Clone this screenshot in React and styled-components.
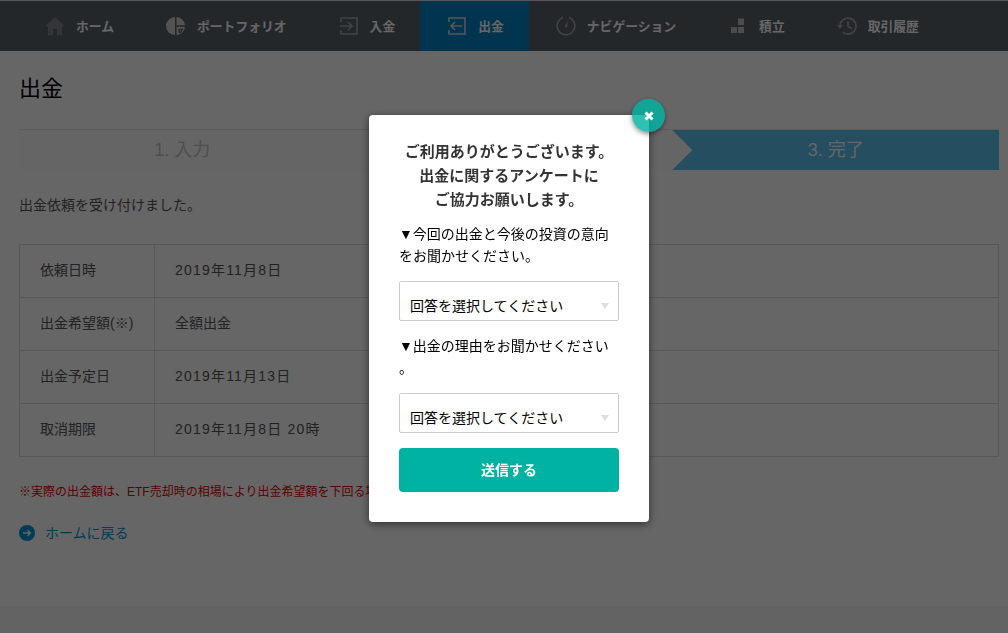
import React from "react";
import styled, { createGlobalStyle } from "styled-components";

const GlobalStyle = createGlobalStyle`
  html, body {
    margin: 0;
    height: 100%;
    overflow: hidden;
  }
  body {
    background: #fff;
    font-family: "Liberation Sans", "Noto Sans CJK JP", sans-serif;
    color: #555;
  }
  * { box-sizing: border-box; }
`;

const HomeIcon = () => (
  <svg width="20" height="20" viewBox="0 0 20 20" fill="#808488">
    <path d="M10 1 L20 10.5 H17 V19 H12 V13 H8 V19 H3 V10.5 H0 Z" />
  </svg>
);

const PieIcon = () => (
  <svg width="20" height="20" viewBox="0 0 20 20">
    <path fill="#d0d0d0" d="M9 1 V19 A9 9 0 0 1 9 1 Z" />
    <path fill="#d0d0d0" d="M10.5 1 A9 9 0 0 1 19 9.2 H10.5 Z" />
    <path fill="#d0d0d0" d="M10.5 10.8 H19 A9 9 0 0 1 10.5 19 Z" />
    <path fill="#576169" d="M12.5 12.8 H17.3 L15 17 H12.5 Z" />
    <path fill="#d0d0d0" d="M13.8 14 H15.2 L14.4 15.6 H13.8 Z" />
  </svg>
);

const DepositIcon = () => (
  <svg width="20" height="20" viewBox="0 0 20 20" fill="none" stroke="#a4a8ac" strokeWidth="1.6">
    <path d="M2 6 V2 H18 V18 H2 V14" />
    <path d="M1 10 H13 M9 6 L13 10 L9 14" />
  </svg>
);

const WithdrawIcon = () => (
  <svg width="20" height="20" viewBox="0 0 20 20" fill="none" stroke="#d0d8e0" strokeWidth="1.6">
    <path d="M2 6 V2 H18 V18 H2 V14" />
    <path d="M15 10 H4 M8 6 L4 10 L8 14" />
  </svg>
);

const GaugeIcon = () => (
  <svg width="20" height="20" viewBox="0 0 20 20" fill="none" stroke="#a4a8ac" strokeWidth="1.6">
    <path d="M7 1.6 A8.8 8.8 0 1 0 13 1.6" />
    <path fill="#a4a8ac" stroke="none" d="M11.4 5 V11 H8.6 Z" />
  </svg>
);

const BlocksIcon = () => (
  <svg width="20" height="20" viewBox="0 0 20 20" fill="#c0c0c0">
    <rect x="10" y="2.5" width="6" height="6.5" />
    <rect x="3" y="11" width="6" height="6" />
    <rect x="10" y="11" width="6" height="6" />
  </svg>
);

const HistoryIcon = () => (
  <svg width="20" height="20" viewBox="0 0 20 20" fill="none" stroke="#a4a8ac" strokeWidth="1.6">
    <path d="M3 10 A8 8 0 1 1 5.6 16" />
    <path fill="#a4a8ac" stroke="none" d="M0 9 H6 L3 13 Z" />
    <path d="M11 5 V10.5 L15 12.5" />
  </svg>
);

const navItems = [
  { label: "ホーム", icon: <HomeIcon /> },
  { label: "ポートフォリオ", icon: <PieIcon /> },
  { label: "入金", icon: <DepositIcon /> },
  { label: "出金", icon: <WithdrawIcon />, active: true },
  { label: "ナビゲーション", icon: <GaugeIcon /> },
  { label: "積立", icon: <BlocksIcon /> },
  { label: "取引履歴", icon: <HistoryIcon /> },
];

const rows = [
  { name: "依頼日時", value: "2019年11月8日", date: true },
  { name: "出金希望額(※)", value: "全額出金" },
  { name: "出金予定日", value: "2019年11月13日", date: true },
  { name: "取消期限", value: "2019年11月8日 20時", date: true },
];

function App() {
  return (
    <>
      <GlobalStyle />
      <Page>
        <Nav>
          {navItems.map(({ label, icon, active }) => (
            <NavItem key={label} $active={active}>
              {icon}
              {label}
            </NavItem>
          ))}
        </Nav>
        <Main>
          <Title>出金</Title>
          <Steps>
            <Step>1. 入力</Step>
            <Step />
            <Step $current>3. 完了</Step>
          </Steps>
          <Message>出金依頼を受け付けました。</Message>
          <InfoTable>
            <tbody>
              {rows.map(({ name, value, date }) => (
                <tr key={name}>
                  <RowName>{name}</RowName>
                  <RowValue $date={date}>{value}</RowValue>
                </tr>
              ))}
            </tbody>
          </InfoTable>
          <Note>※実際の出金額は、ETF売却時の相場により出金希望額を下回る場合があります。</Note>
          <BackLink href="#">
            <svg width="16" height="16" viewBox="0 0 16 16">
              <circle cx="8" cy="8" r="8" fill="#0095d9" />
              <path d="M4 8 H11.5 M8.5 5 L11.5 8 L8.5 11" fill="none" stroke="#fff" strokeWidth="1.3" />
            </svg>
            ホームに戻る
          </BackLink>
        </Main>
        <Footer />
      </Page>
      <Overlay>
        <Modal>
          <CloseButton aria-label="閉じる">
            <svg width="10" height="10" viewBox="0 0 10 10">
              <path d="M1.5 1.5 L8.5 8.5 M8.5 1.5 L1.5 8.5" stroke="#fff" strokeWidth="3" />
            </svg>
          </CloseButton>
          <ModalTitle>
            ご利用ありがとうございます。
            <br />
            出金に関するアンケートに
            <br />
            ご協力お願いします。
          </ModalTitle>
          <Question>
            ▼今回の出金と今後の投資の意向
            <br />
            をお聞かせください。
          </Question>
          <SelectBox>回答を選択してください</SelectBox>
          <Question $second>
            ▼出金の理由をお聞かせください
            <br />。
          </Question>
          <SelectBox>回答を選択してください</SelectBox>
          <SubmitButton>送信する</SubmitButton>
        </Modal>
      </Overlay>
    </>
  );
}

const Page = styled.div`
  height: 100vh;
  display: flex;
  flex-direction: column;
`;

const Nav = styled.nav`
  display: flex;
  height: 51px;
  padding-left: 18px;
  background-color: #576169;
  border-top: 1px solid #d8d8d8;
`;

const NavItem = styled.a`
  display: flex;
  align-items: center;
  gap: 11px;
  padding: 0 25px 1px 27px;
  font-size: 12.8px;
  font-weight: 700;
  color: #fff;
  background-color: ${(p) => (p.$active ? "#0083c6" : "transparent")};

  svg {
    flex: none;
  }
`;

const Main = styled.main`
  flex: 1;
  padding: 0 9px 0 19px;
`;

const Title = styled.h1`
  margin: 0;
  padding: 23px 0 0;
  font-size: 22px;
  font-weight: 400;
  line-height: 30px;
  color: #000;
`;

const Steps = styled.div`
  display: flex;
  height: 41px;
  margin-top: 25px;
  background-color: #fcfcfc;
  border-top: 1px solid #e6e6e6;
`;

const Step = styled.div`
  flex: 1;
  display: flex;
  align-items: center;
  justify-content: center;
  padding-bottom: 5px;
  font-size: 18px;
  color: ${(p) => (p.$current ? "#fff" : "#c4c4c4")};
  background-color: ${(p) => (p.$current ? "#5cc3ef" : "transparent")};
  clip-path: ${(p) =>
    p.$current ? "polygon(0 0, 100% 0, 100% 100%, 0 100%, 20px 50%)" : "none"};
`;

const Message = styled.p`
  margin: 26px 0 0;
  font-size: 14px;
  line-height: 18px;
`;

const InfoTable = styled.table`
  width: 100%;
  margin-top: 30px;
  border-collapse: collapse;
  font-size: 14px;
`;

const RowName = styled.th`
  width: 135px;
  height: 53px;
  padding: 0 20px 5px;
  border: 1px solid #ddd;
  font-weight: 400;
  text-align: left;
`;

const RowValue = styled.td`
  height: 53px;
  padding: 0 20px 5px;
  border: 1px solid #ddd;
  letter-spacing: ${(p) => (p.$date ? "1.2px" : "0")};
`;

const Note = styled.p`
  margin: 26px 0 0;
  font-size: 12px;
  line-height: 18px;
  white-space: nowrap;
  color: #e60000;
`;

const BackLink = styled.a`
  display: flex;
  align-items: center;
  gap: 10px;
  margin-top: 22px;
  font-size: 14px;
  line-height: 20px;
  color: #0095d9;
  text-decoration: none;
`;

const Footer = styled.footer`
  height: 27px;
  background-color: #f8f8f8;
`;

const Overlay = styled.div`
  position: fixed;
  inset: 0;
  background-color: rgba(0, 0, 0, 0.6);
`;

const Modal = styled.div`
  position: relative;
  width: 280px;
  height: 407px;
  margin: 115px 0 0 369px;
  padding: 25px 30px 0;
  background-color: #fff;
  border-radius: 4px;
  box-shadow: 0 2px 8px rgba(0, 0, 0, 0.55);
  color: #000;
`;

const CloseButton = styled.button`
  position: absolute;
  top: -16px;
  right: -16px;
  width: 33px;
  height: 33px;
  padding: 0;
  display: flex;
  align-items: center;
  justify-content: center;
  border: 0;
  border-radius: 50%;
  background-color: rgba(0, 178, 161, 0.82);
  box-shadow: 0 2px 5px rgba(0, 0, 0, 0.45);
`;

const ModalTitle = styled.h2`
  margin: 0;
  font-size: 15px;
  font-weight: 700;
  line-height: 24px;
  text-align: center;
  color: #333;
`;

const Question = styled.p`
  margin: ${(p) => (p.$second ? "14px" : "11px")} 0 14px;
  font-size: 14px;
  line-height: 22px;
`;

const SelectBox = styled.div`
  position: relative;
  height: 40px;
  padding: 14px 10px 0;
  font-size: 14px;
  line-height: 20px;
  background-color: #fff;
  border: 1px solid #ccc;
  border-radius: 2px;

  &::after {
    content: "";
    position: absolute;
    top: 21px;
    right: 9px;
    border-style: solid;
    border-width: 6px 4px 0;
    border-color: #ddd transparent transparent;
  }
`;

const SubmitButton = styled.button`
  display: block;
  width: 100%;
  height: 44px;
  margin-top: 15px;
  padding: 0 0 3px;
  border: 0;
  border-radius: 4px;
  background-color: #00b2a1;
  color: #fff;
  font-family: inherit;
  font-size: 14px;
  font-weight: 700;
`;

export default App;
